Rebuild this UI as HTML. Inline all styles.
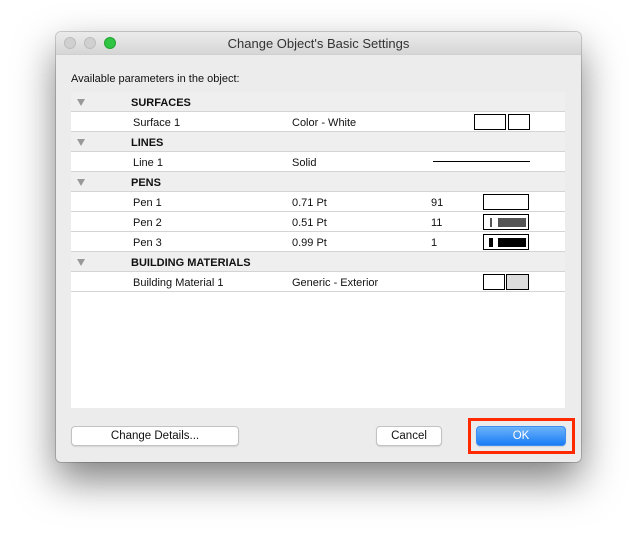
<!DOCTYPE html>
<html><head><style>
body{margin:0;width:637px;height:543px;background:#fff;font-family:"Liberation Sans",sans-serif;font-size:11px;color:#111;position:relative;overflow:hidden}
.win{position:absolute;left:56px;top:32px;width:525px;height:430px;background:#ececec;border-radius:5px;box-shadow:0 18px 40px rgba(0,0,0,.5),0 0 0 1px rgba(0,0,0,.18)}
.tb{height:22px;border-bottom:1px solid #d0d0d0;background:linear-gradient(#ebebeb,#d6d6d6);border-radius:5px 5px 0 0;text-align:center;line-height:24px;font-size:13px;color:#333}
.dot{position:absolute;top:5px;width:12px;height:12px;border-radius:50%;background:#d0d0d0;border:1px solid #bdbdbd;box-sizing:border-box}
.abs{position:absolute}
.tbl{position:absolute;left:15px;top:60px;width:494px;height:316px;background:#fff}
.r{position:absolute;left:0;width:494px;height:20px;border-bottom:1px solid #d4d4d4;box-sizing:border-box}
.h{background:#efefef;font-weight:bold}
.r span{position:absolute;top:5px}
.tri{position:absolute;left:6px;top:7px;width:0;height:0;border-left:4px solid transparent;border-right:4px solid transparent;border-top:7px solid #999}
.bx{position:absolute;border:1px solid #000;background:#fff;box-sizing:border-box}
.btn{position:absolute;height:20px;background:#fff;border:1px solid #c2c2c2;border-radius:4px;box-sizing:border-box;text-align:center;line-height:19px;font-size:11.5px;box-shadow:0 1px 1px rgba(0,0,0,.1)}
</style></head><body>
<div class="win">
<div class="tb">Change Object's Basic Settings</div>
<div class="dot" style="left:8px"></div><div class="dot" style="left:28px"></div>
<div class="dot" style="left:48px;background:#2fc441;border-color:#24a334"></div>
<div class="abs" style="left:15px;top:41px;font-size:11px">Available parameters in the object:</div>
<div class="tbl">
<div class="r h" style="top:0"><i class="tri"></i><span style="left:60px">SURFACES</span></div>
<div class="r" style="top:20px"><span style="left:62px">Surface 1</span><span style="left:221px">Color - White</span><div class="bx" style="left:403px;top:2px;width:32px;height:16px"></div><div class="bx" style="left:437px;top:2px;width:22px;height:16px"></div></div>
<div class="r h" style="top:40px"><i class="tri"></i><span style="left:60px">LINES</span></div>
<div class="r" style="top:60px"><span style="left:62px">Line 1</span><span style="left:221px">Solid</span><div class="abs" style="left:362px;top:9px;width:97px;height:1px;background:#000"></div></div>
<div class="r h" style="top:80px"><i class="tri"></i><span style="left:60px">PENS</span></div>
<div class="r" style="top:100px"><span style="left:62px">Pen 1</span><span style="left:221px">0.71 Pt</span><span style="left:360px">91</span><div class="bx" style="left:412px;top:2px;width:46px;height:16px"></div></div>
<div class="r" style="top:120px"><span style="left:62px">Pen 2</span><span style="left:221px">0.51 Pt</span><span style="left:360px">11</span><div class="bx" style="left:412px;top:2px;width:46px;height:16px"><div class="abs" style="left:6px;top:3px;width:2px;height:9px;background:#555"></div><div class="abs" style="left:14px;top:3px;width:28px;height:9px;background:#555"></div></div></div>
<div class="r" style="top:140px"><span style="left:62px">Pen 3</span><span style="left:221px">0.99 Pt</span><span style="left:360px">1</span><div class="bx" style="left:412px;top:2px;width:46px;height:16px"><div class="abs" style="left:5px;top:3px;width:4px;height:9px;background:#000"></div><div class="abs" style="left:14px;top:3px;width:28px;height:9px;background:#000"></div></div></div>
<div class="r h" style="top:160px"><i class="tri"></i><span style="left:60px">BUILDING MATERIALS</span></div>
<div class="r" style="top:180px"><span style="left:62px">Building Material 1</span><span style="left:221px">Generic - Exterior</span><div class="bx" style="left:412px;top:2px;width:22px;height:16px"></div><div class="bx" style="left:435px;top:2px;width:23px;height:16px;background:#ddd"></div></div>
</div>
<div class="btn" style="left:15px;top:394px;width:168px">Change Details...</div>
<div class="btn" style="left:320px;top:394px;width:66px">Cancel</div>
<div class="abs" style="left:412px;top:386px;width:107px;height:36px;border:3px solid #ff2a00;box-sizing:border-box"></div>
<div class="btn" style="left:420px;top:394px;width:90px;background:linear-gradient(#6cb3fa,#1a7cf5);border-color:#3d8ef0;color:#fff">OK</div>
</div>
</body></html>
